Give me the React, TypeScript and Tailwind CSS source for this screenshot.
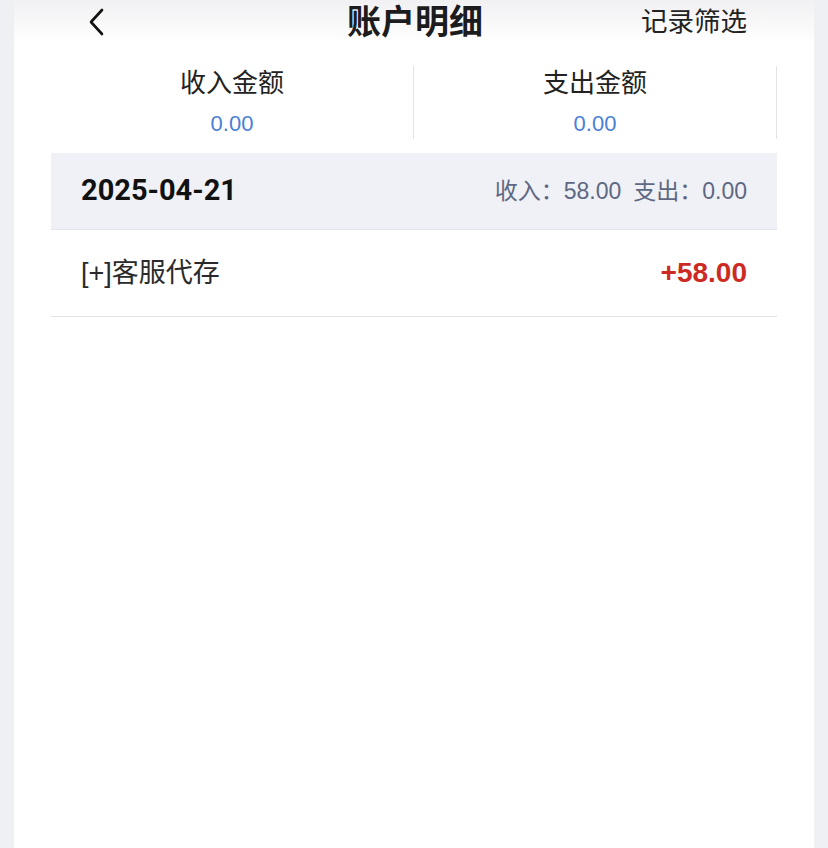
const cjk = '"Liberation Sans", "Noto Sans CJK SC", sans-serif';

function BackIcon() {
  return (
    <svg width="16" height="28" viewBox="0 0 16 28" fill="none">
      <polyline points="13,2 2,14 13,26" stroke="#111" strokeWidth="2.6" strokeLinecap="round" strokeLinejoin="round" />
    </svg>
  );
}

const summary = [
  { label: '收入金额', value: '0.00' },
  { label: '支出金额', value: '0.00' }
];

export default function App() {
  return (
    <div className="flex min-h-[848px] justify-center bg-[#eff0f4] px-[14px]" style={{ fontFamily: cjk }}>
      <div className="flex w-[800px] flex-col bg-white">
        <header className="grid h-[44px] grid-cols-3 items-center bg-gradient-to-b from-[#f1f1f3] to-white pl-[75px] pr-[67px]">
          <div className="flex items-center">
            <BackIcon />
          </div>
          <h1 className="pr-[6px] text-center text-[34px] font-bold leading-none text-[#1c1c1e]">账户明细</h1>
          <div className="text-right text-[26.5px] leading-none text-[#222]">记录筛选</div>
        </header>

        <div className="mx-[37px] grid grid-cols-2 pb-[14px] pt-[22px]">
          {summary.map((item) => (
            <div key={item.label} className="flex h-[73px] flex-col items-center border-r border-[#e3e3e6]">
              <span className="text-[26px] leading-[34px] text-[#222]">{item.label}</span>
              <span className="mt-[9px] text-[22px] leading-[30px] text-[#4a80d4]">{item.value}</span>
            </div>
          ))}
        </div>

        <div className="mx-[37px]">
          <div className="flex h-[77px] items-center justify-between border-b border-[#e4e5ea] bg-[#eff1f6] px-[30px]">
            <span className="text-[29px] font-bold text-[#111]" style={{ fontFamily: 'Roboto, sans-serif' }}>
              2025-04-21
            </span>
            <div className="flex gap-[12px] text-[23px] text-[#5f6882]">
              <span>收入：58.00</span>
              <span>支出：0.00</span>
            </div>
          </div>
          <div className="flex h-[87px] items-center justify-between border-b border-[#e4e5ea] px-[30px]">
            <span className="text-[27px] text-[#2a2a2a]">[+]客服代存</span>
            <span className="text-[28px] font-bold text-[#cc2a22]">+58.00</span>
          </div>
        </div>
      </div>
    </div>
  );
}
